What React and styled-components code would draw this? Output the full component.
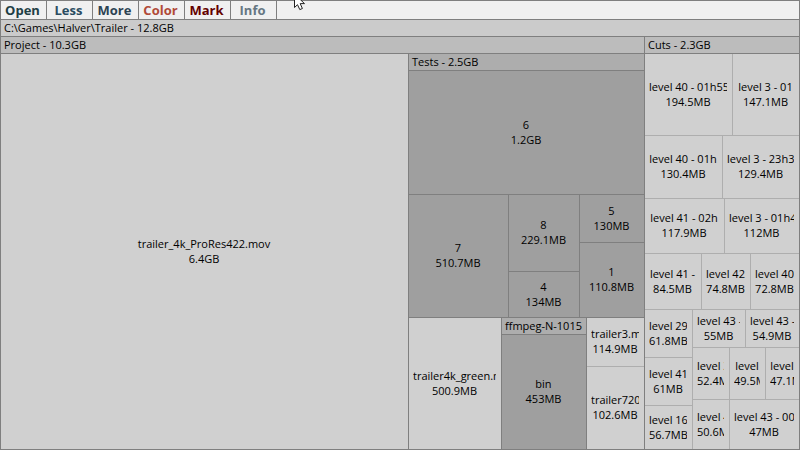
import React from "react";
import styled, { createGlobalStyle } from "styled-components";

const LINE = "#7f7f7f";
const SOFT_LINE = "#aeaeae";
const FILE = "#d0d0d0";
const FOLDER = "#9f9f9f";

const GlobalStyle = createGlobalStyle`
  *, *::before, *::after { box-sizing: border-box; }
  body {
    margin: 0;
    font-family: "Open Sans", "Noto Sans", sans-serif;
    font-size: 11px;
    line-height: 15px;
    color: #000;
  }
`;

const Window = styled.div`
  display: flex;
  flex-direction: column;
  gap: 1px;
  min-height: 100vh;
  padding: 1px;
  background: ${LINE};
  overflow: hidden;
`;

const Toolbar = styled.nav`
  display: flex;
  gap: 1px;
  height: 18px;
  background: ${LINE};
`;

const ToolButton = styled.button`
  flex: 0 0 45px;
  padding: 0 2px 0 0;
  border: 0;
  background: #f0f0f0;
  color: ${(p) => p.$color};
  font: inherit;
  font-size: 13px;
  font-weight: 700;
  line-height: 18px;
  text-align: center;
  white-space: nowrap;
`;

const ToolbarRest = styled.div`
  flex: 1;
  background: #f0f0f0;
`;

const Cursor = styled.svg`
  position: absolute;
  top: 0;
  left: 294px;
  pointer-events: none;
`;

const Header = styled.header`
  flex: none;
  height: 16px;
  padding: 0 3px;
  overflow: hidden;
  white-space: nowrap;
  background: ${(p) => p.$tone};
`;

const Split = styled.section`
  display: flex;
  flex: ${(p) => p.$size} 1 0;
  flex-direction: ${(p) => (p.$column ? "column" : "row")};
  gap: 1px;
  min-width: 0;
  min-height: 0;
  background: ${(p) => (p.$soft ? SOFT_LINE : LINE)};
`;

const Tile = styled.article`
  display: flex;
  flex: ${(p) => p.$size} 1 0;
  flex-direction: column;
  justify-content: center;
  min-width: 0;
  min-height: 0;
  background: ${(p) => (p.$folder ? FOLDER : FILE)};
`;

const TileText = styled.div`
  margin: 0 5px 0 4px;
  overflow: hidden;
  text-align: center;
  white-space: nowrap;

  &:last-child {
    margin-bottom: 2px;
  }
`;

const tools = [
  ["Open", "#1f3f45"],
  ["Less", "#2b4d62"],
  ["More", "#2c4353"],
  ["Color", "#b04a38"],
  ["Mark", "#640000"],
  ["Info", "#667783"],
];

const file = (size, name, bytes) => ({ size, name, bytes });
const folder = (size, name, bytes) => ({ size, name, bytes, folder: true });
const row = (size, ...items) => ({ size, items });
const column = (size, ...items) => ({ size, items, column: true });
const soft = (group) => ({ ...group, soft: true });
const titled = (title, tone, group) => ({ ...group, title, tone });

const tree = row(
  1,
  titled("Project - 10.3GB", "#bcbcbc", column(
    643,
    row(
      395,
      file(407, "trailer_4k_ProRes422.mov", "6.4GB"),
      column(
        235,
        titled("Tests - 2.5GB", "#adadad", column(
          263,
          folder(123, "6", "1.2GB"),
          row(
            122,
            folder(99, "7", "510.7MB"),
            column(70, folder(76, "8", "229.1MB"), folder(45, "4", "134MB")),
            column(64, folder(47, "5", "130MB"), folder(74, "1", "110.8MB"))
          )
        )),
        row(
          131,
          file(92, "trailer4k_green.m", "500.9MB"),
          titled("ffmpeg-N-1015", "#adadad", column(84, folder(114, "bin", "453MB"))),
          soft(column(57, file(48, "trailer3.m", "114.9MB"), file(82, "trailer720", "102.6MB")))
        )
      )
    )
  )),
  titled("Cuts - 2.3GB", "#bcbcbc", column(
    154,
    soft(column(
      395,
      soft(row(81, file(87, "level 40 - 01h55", "194.5MB"), file(66, "level 3 - 01", "147.1MB"))),
      soft(row(62, file(77, "level 40 - 01h", "130.4MB"), file(76, "level 3 - 23h3", "129.4MB"))),
      soft(row(54, file(79, "level 41 - 02h", "117.9MB"), file(74, "level 3 - 01h4", "112MB"))),
      soft(row(55, file(56, "level 41 -", "84.5MB"), file(48, "level 42", "74.8MB"), file(48, "level 40", "72.8MB"))),
      soft(row(
        139,
        soft(column(47, file(47, "level 29", "61.8MB"), file(47, "level 41", "61MB"), file(43, "level 16", "56.7MB"))),
        soft(column(
          106,
          soft(row(37, file(52, "level 43 -", "55MB"), file(53, "level 43 -", "54.9MB"))),
          soft(row(51, file(36, "level 3", "52.4MB"), file(35, "level", "49.5MB"), file(33, "level", "47.1MB"))),
          soft(row(49, file(36, "level 4", "50.6MB"), file(69, "level 43 - 00", "47MB")))
        ))
      ))
    ))
  ))
);

function Node({ node }) {
  if (!node.items) {
    return (
      <Tile $size={node.size} $folder={node.folder}>
        <TileText>{node.name}</TileText>
        <TileText>{node.bytes}</TileText>
      </Tile>
    );
  }
  return (
    <Split $size={node.size} $column={node.column} $soft={node.soft}>
      {node.title && <Header $tone={node.tone}>{node.title}</Header>}
      {node.items.map((item, i) => (
        <Node key={i} node={item} />
      ))}
    </Split>
  );
}

export default function App() {
  return (
    <>
      <GlobalStyle />
      <Window>
        <Toolbar>
          {tools.map(([label, color]) => (
            <ToolButton key={label} type="button" $color={color}>
              {label}
            </ToolButton>
          ))}
          <ToolbarRest />
        </Toolbar>
        <Header $tone="#cbcbcb">C:\Games\Halver\Trailer - 12.8GB</Header>
        <Node node={tree} />
      </Window>
      <Cursor width="12" height="12" viewBox="0 0 12 12" aria-hidden="true">
        <path
          d="M0.5 -6V7.5L3.5 4.7L5.8 9.6L8.4 8.5L6.2 3.6H10.5L0.5 -6Z"
          fill="#fff"
          stroke="#222"
          strokeWidth="1"
        />
      </Cursor>
    </>
  );
}
